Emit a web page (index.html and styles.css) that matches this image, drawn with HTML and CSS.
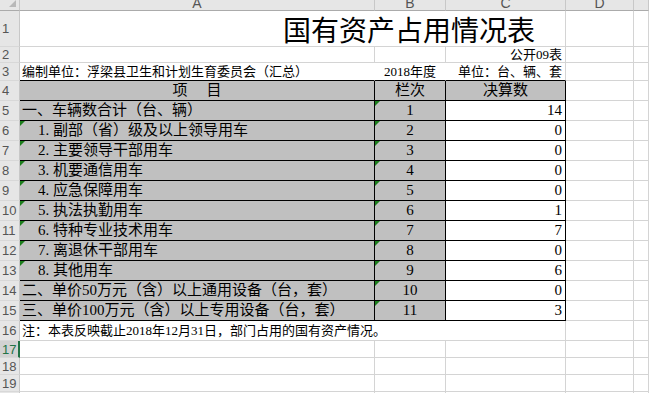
FILE: index.html
```html
<!DOCTYPE html>
<html lang="zh-CN">
<head>
<meta charset="utf-8">
<title>国有资产占用情况表</title>
<link rel="stylesheet" href="styles.css">
</head>
<body>
<div class="sheet">
  <!-- column headers -->
  <div class="ch corner"><svg class="corner-tri" width="10" height="8" viewBox="0 0 10 8"><polygon points="9,0 9,7 2,7" fill="#b8b8b8"/></svg></div>
  <div class="ch">A</div>
  <div class="ch">B</div>
  <div class="ch">C</div>
  <div class="ch">D</div>
  <div class="ch"></div>

  <!-- row 1 -->
  <div class="rh">1</div>
  <div class="c title span3">国有资产占用情况表</div>
  <div class="c"></div>
  <div class="c"></div>

  <!-- row 2 -->
  <div class="rh">2</div>
  <div class="c"></div>
  <div class="c"></div>
  <div class="c sm right">公开09表</div>
  <div class="c"></div>
  <div class="c"></div>

  <!-- row 3 -->
  <div class="rh">3</div>
  <div class="c sm nr bb">编制单位：浮梁县卫生和计划生育委员会（汇总）</div>
  <div class="c sm nr bb center">2018年度</div>
  <div class="c sm bb right">单位：台、辆、套</div>
  <div class="c"></div>
  <div class="c"></div>

  <!-- row 4 -->
  <div class="rh">4</div>
  <div class="c tb g center wide"><span>项</span><span>目</span></div>
  <div class="c tb g center">栏次</div>
  <div class="c tb g center">决算数</div>
  <div class="c"></div>
  <div class="c"></div>

  <!-- row 5 -->
  <div class="rh">5</div>
  <div class="c tb g">一、车辆数合计（台、辆）</div>
  <div class="c tb g center flag">1</div>
  <div class="c tb right num">14</div>
  <div class="c"></div>
  <div class="c"></div>

  <!-- row 6 -->
  <div class="rh">6</div>
  <div class="c tb g ind flag"><span class="no">1.</span>副部（省）级及以上领导用车</div>
  <div class="c tb g center flag">2</div>
  <div class="c tb right num">0</div>
  <div class="c"></div>
  <div class="c"></div>

  <!-- row 7 -->
  <div class="rh">7</div>
  <div class="c tb g ind flag"><span class="no">2.</span>主要领导干部用车</div>
  <div class="c tb g center flag">3</div>
  <div class="c tb right num">0</div>
  <div class="c"></div>
  <div class="c"></div>

  <!-- row 8 -->
  <div class="rh">8</div>
  <div class="c tb g ind flag"><span class="no">3.</span>机要通信用车</div>
  <div class="c tb g center flag">4</div>
  <div class="c tb right num">0</div>
  <div class="c"></div>
  <div class="c"></div>

  <!-- row 9 -->
  <div class="rh">9</div>
  <div class="c tb g ind flag"><span class="no">4.</span>应急保障用车</div>
  <div class="c tb g center flag">5</div>
  <div class="c tb right num">0</div>
  <div class="c"></div>
  <div class="c"></div>

  <!-- row 10 -->
  <div class="rh">10</div>
  <div class="c tb g ind flag"><span class="no">5.</span>执法执勤用车</div>
  <div class="c tb g center flag">6</div>
  <div class="c tb right num">1</div>
  <div class="c"></div>
  <div class="c"></div>

  <!-- row 11 -->
  <div class="rh">11</div>
  <div class="c tb g ind flag"><span class="no">6.</span>特种专业技术用车</div>
  <div class="c tb g center flag">7</div>
  <div class="c tb right num">7</div>
  <div class="c"></div>
  <div class="c"></div>

  <!-- row 12 -->
  <div class="rh">12</div>
  <div class="c tb g ind flag"><span class="no">7.</span>离退休干部用车</div>
  <div class="c tb g center flag">8</div>
  <div class="c tb right num">0</div>
  <div class="c"></div>
  <div class="c"></div>

  <!-- row 13 -->
  <div class="rh">13</div>
  <div class="c tb g ind flag"><span class="no">8.</span>其他用车</div>
  <div class="c tb g center flag">9</div>
  <div class="c tb right num">6</div>
  <div class="c"></div>
  <div class="c"></div>

  <!-- row 14 -->
  <div class="rh">14</div>
  <div class="c tb g">二、单价50万元（含）以上通用设备（台，套）</div>
  <div class="c tb g center flag">10</div>
  <div class="c tb right num">0</div>
  <div class="c"></div>
  <div class="c"></div>

  <!-- row 15 -->
  <div class="rh">15</div>
  <div class="c tb g">三、单价100万元（含）以上专用设备（台，套）</div>
  <div class="c tb g center flag">11</div>
  <div class="c tb right num">3</div>
  <div class="c"></div>
  <div class="c"></div>

  <!-- row 16 -->
  <div class="rh">16</div>
  <div class="c sm span3">注：本表反映截止2018年12月31日，部门占用的国有资产情况。</div>
  <div class="c"></div>
  <div class="c"></div>

  <!-- row 17 -->
  <div class="rh sel">17</div>
  <div class="c"></div>
  <div class="c"></div>
  <div class="c"></div>
  <div class="c"></div>
  <div class="c"></div>

  <!-- row 18 -->
  <div class="rh">18</div>
  <div class="c"></div>
  <div class="c"></div>
  <div class="c"></div>
  <div class="c"></div>
  <div class="c"></div>

  <!-- row 19 -->
  <div class="rh">19</div>
  <div class="c"></div>
  <div class="c"></div>
  <div class="c"></div>
  <div class="c"></div>
  <div class="c"></div>

  <!-- row 20 -->
  <div class="rh">20</div>
  <div class="c"></div>
  <div class="c"></div>
  <div class="c"></div>
  <div class="c"></div>
  <div class="c"></div>
</div>
</body>
</html>
```

FILE: styles.css
```css
html, body {
  margin: 0;
  padding: 0;
  background: #ffffff;
  overflow: hidden;
  width: 649px;
  height: 393px;
}

.sheet {
  display: grid;
  grid-template-columns: 20px 355px 71px 120px 68px 15px;
  grid-template-rows: 11px 36px 16px 18px repeat(13, 20px) repeat(4, 17px);
  width: 649px;
}

.sheet > div {
  box-sizing: border-box;
  min-width: 0;
}

/* column headers */
.ch {
  background: #e6e6e6;
  border-right: 1px solid #c8c8c8;
  border-bottom: 1px solid #ababab;
  display: flex;
  justify-content: center;
  align-items: flex-end;
  overflow: hidden;
  font-family: "Liberation Sans", Arial, sans-serif;
  font-size: 14px;
  line-height: 14px;
  color: #555555;
}

.corner {
  justify-content: flex-end;
  align-items: flex-start;
  position: relative;
}

.corner-tri {
  display: block;
  margin-right: 2px;
}

/* row headers */
.rh {
  background: #e6e6e6;
  border-right: 1px solid #c8c8c8;
  border-bottom: 1px solid #d8d8d8;
  display: flex;
  align-items: center;
  padding-left: 2px;
  font-family: "Liberation Sans", Arial, sans-serif;
  font-size: 13px;
  line-height: 13px;
  color: #555555;
  overflow: hidden;
}

.rh.sel {
  background: #d2d2d2;
  color: #217346;
  border-right: 2px solid #217346;
}

/* cells */
.c {
  border-right: 1px solid #d4d4d4;
  border-bottom: 1px solid #d4d4d4;
  display: flex;
  align-items: center;
  white-space: nowrap;
  overflow: hidden;
  position: relative;
  padding-left: 2px;
  font-family: "Liberation Serif", "Noto Sans CJK SC", serif;
  font-size: 15px;
  line-height: 1;
  color: #000000;
}

.span3 {
  grid-column: span 3;
}

.title {
  font-family: "Noto Sans CJK SC", sans-serif;
  font-size: 28px;
  padding-left: 263px;
  padding-top: 1px;
}

.sm {
  font-size: 13px;
}

.right {
  justify-content: flex-end;
  padding-left: 0;
  padding-right: 3px;
}

.center {
  justify-content: center;
  padding-left: 0;
}

.wide {
  gap: 19px;
}

.nr {
  border-right-color: transparent;
}

.bb {
  border-bottom-color: #000000;
}

.tb {
  border-right-color: #000000;
  border-bottom-color: #000000;
}

.g {
  background: #c0c0c0;
}

.ind {
  padding-left: 18px;
}

.no {
  display: inline-block;
  width: 15px;
}

.num {
  font-size: 15px;
}

/* "number stored as text" indicator */
.flag::before {
  content: "";
  position: absolute;
  top: 0;
  left: 0;
  width: 0;
  height: 0;
  border-top: 5px solid #1b7d1b;
  border-right: 5px solid transparent;
}
```
